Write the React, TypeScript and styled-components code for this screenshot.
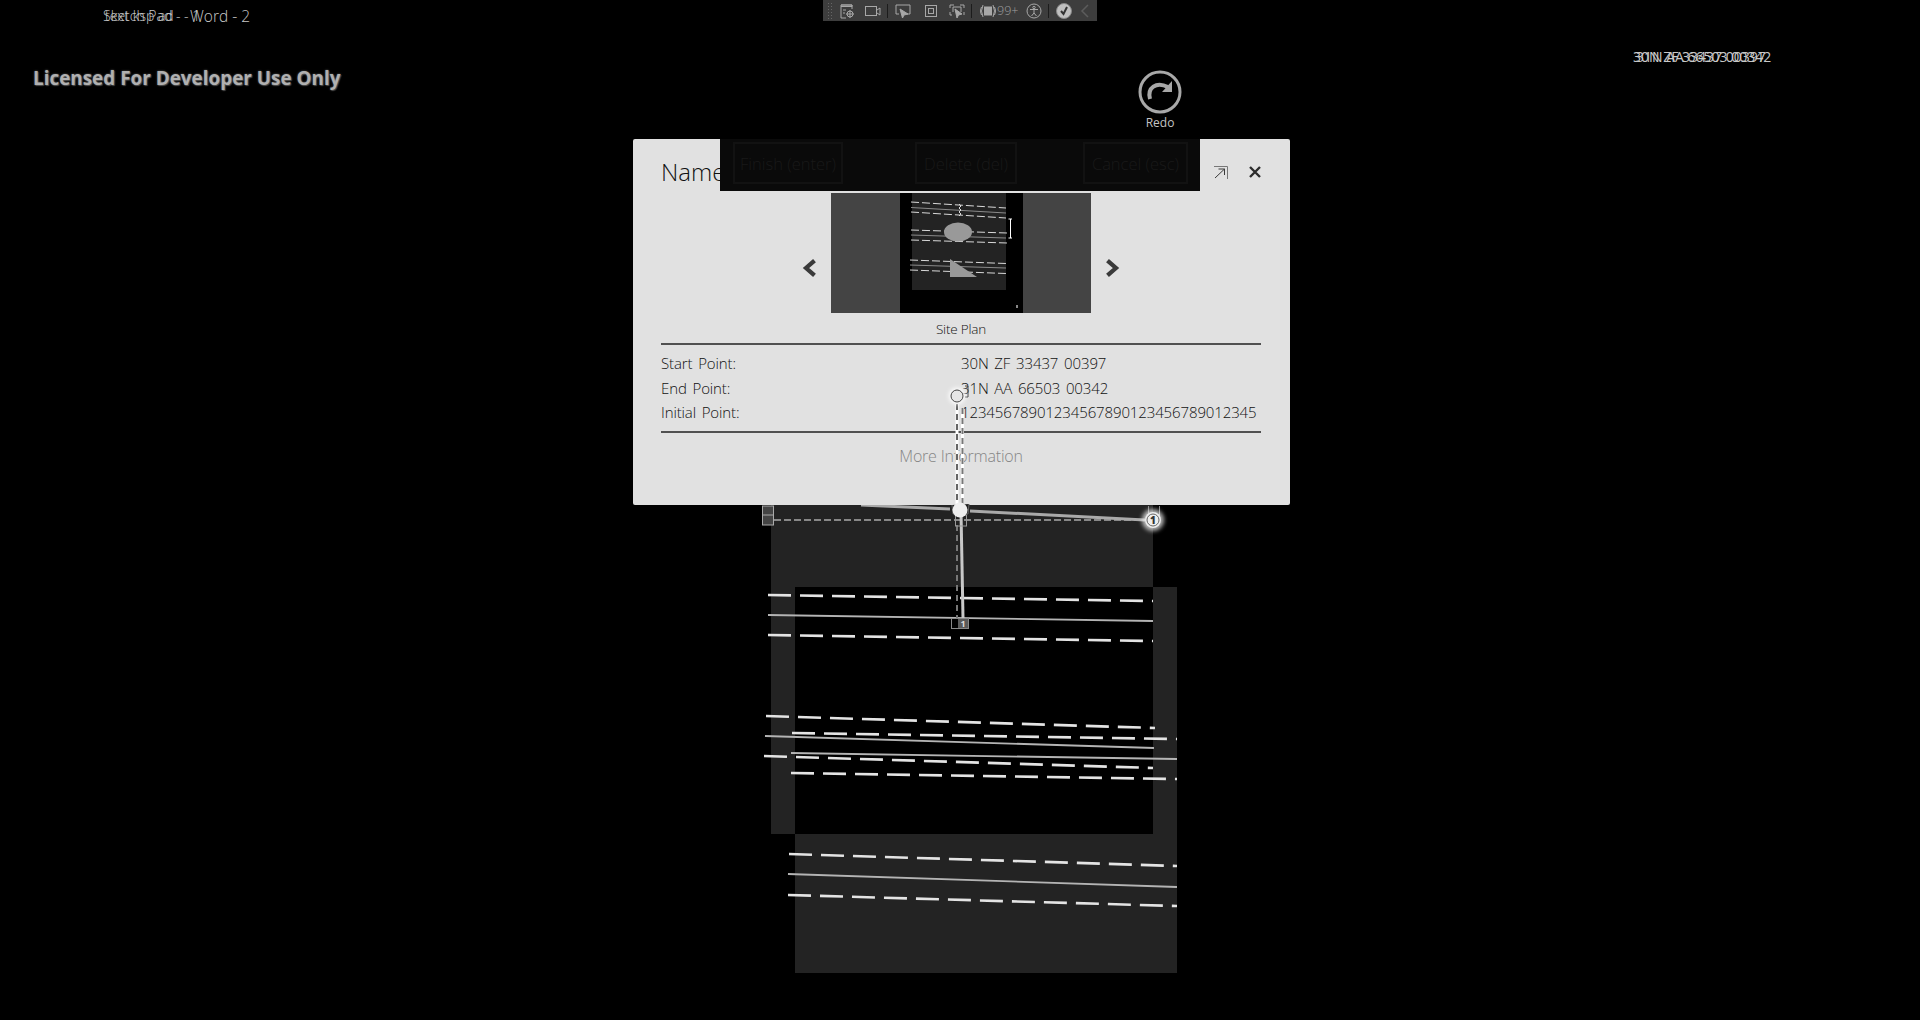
import * as React from 'react'
import styled, { createGlobalStyle } from 'styled-components'

const Global = createGlobalStyle`
  html, body {
    margin: 0;
    background: #000;
  }
`

const Page = styled.div`
  position: relative;
  width: 1920px;
  height: 1020px;
  overflow: hidden;
  background: #000;
  font-family: 'Open Sans', 'Noto Sans', sans-serif;
  font-weight: 300;
`

const Layer = styled.svg<{ $top?: boolean }>`
  position: absolute;
  left: 0;
  top: 0;
  z-index: ${(p) => (p.$top ? 5 : 0)};
  pointer-events: none;
`

const GarbledText = styled.div<{ $x: number; $y: number; $size: number; $weight?: number }>`
  position: absolute;
  left: ${(p) => p.$x}px;
  top: ${(p) => p.$y}px;
  font-size: ${(p) => p.$size}px;
  font-weight: ${(p) => p.$weight ?? 300};
  line-height: 20px;
  color: #c8c8c8;
  white-space: nowrap;
`

const Watermark = styled.div`
  position: absolute;
  left: 33px;
  top: 65px;
  font-family: 'Open Sans', sans-serif;
  font-size: 18.9px;
  line-height: 26px;
  font-weight: 700;
  color: #b0b0b0;
  text-shadow: 0 0 2px #666, 1px 1px 1px #444;
`

const ToolBar = styled.div`
  position: absolute;
  left: 823px;
  top: 0;
  width: 274px;
  height: 21px;
  display: flex;
  align-items: center;
  background: #3d3d3d;
  color: #a8a8a8;
`

const Grip = styled.span`
  width: 6px;
  height: 17px;
  margin: 0 6px 0 4px;
  background-image: radial-gradient(#666 1px, transparent 1px);
  background-size: 3px 3px;
`

const ToolSep = styled.span<{ $after?: number }>`
  width: 1px;
  height: 14px;
  margin: 0 ${(p) => p.$after ?? 6}px 0 6px;
  background: #1c1c1c;
`

const ToolIcon = styled.svg<{ $gap?: number }>`
  width: 16px;
  height: 16px;
  flex: none;
  margin-right: ${(p) => p.$gap ?? 0}px;
  fill: none;
  stroke: #a8a8a8;
  stroke-width: 1;
`

const Count = styled.span`
  width: 21px;
  margin-right: 8px;
  font-size: 12.5px;
  line-height: 21px;
  color: #a0a0a0;
`

const RedoButton = styled.div`
  position: absolute;
  left: 1135px;
  top: 70px;
  width: 50px;
  display: flex;
  flex-direction: column;
  align-items: center;
  gap: 1px;
  color: #c4c4c4;
  font-size: 12px;
  line-height: 15px;
  font-weight: 400;
`

const Dialog = styled.div`
  position: absolute;
  left: 633px;
  top: 139px;
  width: 657px;
  height: 366px;
  box-sizing: border-box;
  padding: 0 29px 0 28px;
  display: flex;
  flex-direction: column;
  background: #e1e1e1;
  border-radius: 2px;
  color: #111;
  z-index: 2;
`

const Header = styled.div`
  height: 54px;
  flex: none;
  display: flex;
  align-items: flex-start;
  justify-content: space-between;
`

const Title = styled.h1`
  margin: 16px 0 0;
  font-size: 24px;
  line-height: 34px;
  font-weight: 300;
`

const HeaderTools = styled.div`
  display: flex;
  align-items: center;
  gap: 20px;
  margin: 26px -1px 0 0;
`

const Carousel = styled.div`
  height: 120px;
  flex: none;
  display: flex;
  align-items: flex-start;
  justify-content: center;
  gap: 12px;
`

const Chevron = styled.svg`
  width: 18px;
  height: 18px;
  margin-top: 66px;
  fill: none;
  stroke: #3a3a3a;
  stroke-width: 3.8;
`

const Thumb = styled.svg`
  width: 260px;
  height: 120px;
  flex: none;
`

const Caption = styled.div`
  height: 30px;
  box-sizing: border-box;
  padding-top: 6px;
  font-size: 13.5px;
  line-height: 20px;
  text-align: center;
  letter-spacing: -0.2px;
`

const Details = styled.div`
  padding: 6px 0 6.5px;
  border-top: 2px solid #505050;
  border-bottom: 2px solid #505050;
`

const Row = styled.div`
  display: grid;
  grid-template-columns: 300px 1fr;
  font-size: 15px;
  line-height: 24.5px;
  letter-spacing: -0.12px;
  word-spacing: 2px;
  white-space: nowrap;
`

const More = styled.div`
  font-size: 16px;
  line-height: 46px;
  color: #858585;
  text-align: center;
  letter-spacing: -0.2px;
`

const ActionBar = styled.div`
  position: absolute;
  left: 720px;
  top: 139px;
  width: 480px;
  height: 52px;
  box-sizing: border-box;
  padding: 3px 0 0 13px;
  display: flex;
  align-items: flex-start;
  background: #0a0a0a;
  z-index: 3;
`

const ActionButton = styled.button<{ $width: number; $after: number }>`
  width: ${(p) => p.$width}px;
  height: 42px;
  margin-right: ${(p) => p.$after}px;
  padding: 0;
  background: transparent;
  border: 2px solid #121212;
  color: #191919;
  font-family: inherit;
  font-size: 16.5px;
  font-weight: 300;
  white-space: nowrap;
`

const Handle = styled.span`
  position: absolute;
  left: 951px;
  top: 618px;
  width: 18px;
  height: 11px;
  display: flex;
  justify-content: flex-end;
  z-index: 6;
  border: 1px solid #888;
  box-sizing: border-box;
`

const HandleNum = styled.span`
  width: 10px;
  background: #5a5a5a;
  color: #ddd;
  font-size: 9px;
  line-height: 9px;
  font-weight: 700;
  text-align: center;
`

const StepNum = styled.span`
  position: absolute;
  left: 1146px;
  top: 513px;
  width: 14px;
  height: 14px;
  z-index: 6;
  color: #333;
  font-size: 10px;
  line-height: 14px;
  font-weight: 800;
  text-align: center;
`

type Seg = [number, number, number, number]

const dashed: Seg[] = [
  [768, 595, 1153, 601],
  [768, 635, 1153, 641],
  [766, 716, 1155, 728],
  [764, 756, 1153, 768],
  [792, 733, 1177, 739],
  [791, 773, 1177, 779],
  [789, 854, 1177, 866],
  [788, 895, 1177, 906],
]

const solid: Seg[] = [
  [768, 615, 1153, 621],
  [765, 736, 1154, 748],
  [791, 753, 1177, 759],
  [788, 874, 1177, 887],
]

const thumbDashed: Seg[] = [
  [80, 9, 175, 15],
  [80, 19, 175, 25],
  [80, 37, 176, 40],
  [80, 47, 176, 50],
  [79, 67, 175, 70.5],
  [79, 77, 175, 80.5],
]

const thumbSolid: Seg[] = [
  [80, 14.5, 175, 20],
  [80, 42, 175, 45],
  [79, 72, 175, 75],
]

const Road: React.FC = () => (
  <Layer width={1920} height={1020}>
    <path d="M771 505H1153V587H795V834H771Z" fill="#232323" />
    <path d="M1153 587H1177V973H795V834H1153Z" fill="#232323" />
    {solid.map(([x1, y1, x2, y2]) => (
      <line key={`s${y1}`} x1={x1} y1={y1} x2={x2} y2={y2} stroke="#b4b4b4" strokeWidth={1.8} />
    ))}
    {dashed.map(([x1, y1, x2, y2]) => (
      <line key={`d${y1}`} x1={x1} y1={y1} x2={x2} y2={y2} stroke="#e4e4e4" strokeWidth={2.6} strokeDasharray="23 9" />
    ))}
    <line x1={774} y1={520} x2={1145} y2={520} stroke="#eee" strokeWidth={1} strokeDasharray="7 3" />
    <path d="M861 505L950 509M970 511L1145 520" stroke="#aaa" strokeWidth={3} fill="none" />
    <line x1={957} y1={525} x2={957} y2={618} stroke="#777" strokeWidth={2} strokeDasharray="6 4" />
    <line x1={961} y1={512} x2={963} y2={618} stroke="#c8c8c8" strokeWidth={3} />
    <rect x={762.5} y={506} width={11} height={19} fill="#444" stroke="#aaa" />
    <line x1={762} y1={515} x2={774} y2={515} stroke="#aaa" />
    <path d="M1148.5 506V516M1159.5 506V516" stroke="#888" />
    <rect x={955.5} y={515} width={11} height={11} fill="none" stroke="#999" />
  </Layer>
)

const Overlay: React.FC = () => (
  <Layer $top width={1920} height={1020}>
    <defs>
      <filter id="glow" x="-60%" y="-60%" width="220%" height="220%">
        <feGaussianBlur stdDeviation="2" />
      </filter>
    </defs>
    <line x1={957} y1={404} x2={957} y2={506} stroke="#fff" strokeWidth={3} />
    <line x1={957} y1={404} x2={957} y2={506} stroke="#666" strokeWidth={2} strokeDasharray="6 4" />
    <line x1={962.5} y1={408} x2={962.5} y2={506} stroke="#fff" strokeWidth={3} />
    <line x1={962.5} y1={408} x2={962.5} y2={506} stroke="#777" strokeWidth={2} strokeDasharray="6 4" />
    <path d="M965 386h3v11h-3" fill="none" stroke="#444" />
    <circle cx={957} cy={396} r={8} fill="#fff" filter="url(#glow)" />
    <circle cx={957} cy={396} r={6} fill="#e6e6e6" stroke="#444" />
    <path d="M952 505L953 514H968L969 504" fill="#222" stroke="#666" />
    <circle cx={960} cy={510} r={7.5} fill="#eee" />
    <circle cx={1153} cy={520} r={11} fill="#fff" opacity={0.7} filter="url(#glow)" />
    <circle cx={1153} cy={520} r={8} fill="#eee" />
    <circle cx={1153} cy={520} r={6} fill="none" stroke="#666" />
  </Layer>
)

const App: React.FC = () => (
  <Page>
    <Global />
    <Road />
    <GarbledText $x={103} $y={6} $size={14}>Sketch Pad - - 1</GarbledText>
    <GarbledText $x={105} $y={6} $size={14}>text ksp ad</GarbledText>
    <GarbledText $x={190} $y={6} $size={15.5}>Word - 2</GarbledText>
    <Watermark>Licensed For Developer Use Only</Watermark>
    <ToolBar>
      <Grip />
      <ToolIcon viewBox="0 0 16 16" $gap={10}>
        <path d="M13 6V2H2V15H7M2 2h11v1.5H2" />
        <circle cx="11" cy="11" r="3" />
        <path d="M11 7v8M7 11h8M4 7h3M4 10h2" />
      </ToolIcon>
      <ToolIcon viewBox="0 0 16 16">
        <rect x="0.5" y="3.5" width="11" height="9" />
        <path d="M12 7l3-2v7l-3-2" />
      </ToolIcon>
      <ToolSep $after={7} />
      <ToolIcon viewBox="0 0 16 16" $gap={12}>
        <path d="M4 11H1V2H15V11H12" />
        <path d="M5 6L13 11L9 12L7.5 15Z" fill="#a8a8a8" />
      </ToolIcon>
      <ToolIcon viewBox="0 0 16 16" $gap={10}>
        <rect x="2.5" y="2.5" width="11" height="11" />
        <rect x="5.5" y="5.5" width="5" height="5" />
      </ToolIcon>
      <ToolIcon viewBox="0 0 16 16">
        <path d="M1 5V2H5M11 2H15V5M15 9V12M1 9V12H3" />
        <path d="M4 4H12V9M4 4V9" />
        <path d="M6 6L13 11L9.5 12L8 15Z" fill="#a8a8a8" />
      </ToolIcon>
      <ToolSep $after={8} />
      <ToolIcon viewBox="0 0 16 16" $gap={1}>
        <rect x="4.5" y="4" width="7" height="8" fill="#a8a8a8" />
        <path d="M3 2Q0 8 3 14M13 2Q16 8 13 14M1.5 4Q-1 8 1.5 12M14.5 4Q17 8 14.5 12" />
      </ToolIcon>
      <Count>99+</Count>
      <ToolIcon viewBox="0 0 16 16">
        <circle cx="8" cy="8" r="7" />
        <circle cx="8" cy="4.5" r="1.2" />
        <path d="M4 6.5H12M8 6.5V10L5.5 13M8 10L10.5 13" />
      </ToolIcon>
      <ToolSep $after={7} />
      <ToolIcon viewBox="0 0 16 16" $gap={6}>
        <circle cx="8" cy="8" r="7.5" fill="#c0c0c0" stroke="#888" />
        <path d="M5 8L7.5 11L11 4" stroke="#333" strokeWidth="2" />
      </ToolIcon>
      <ToolIcon viewBox="0 0 16 16">
        <path d="M10 2L4 8L10 14" stroke="#5c5c5c" strokeWidth="1.5" />
      </ToolIcon>
    </ToolBar>
    <GarbledText $x={1633} $y={47} $size={14} $weight={400}>30N ZF 33437 00397</GarbledText>
    <GarbledText $x={1636} $y={47} $size={14} $weight={400}>31N AA 66503 00342</GarbledText>
    <RedoButton>
      <svg width="44" height="44" viewBox="0 0 44 44" fill="none" stroke="#a8a8a8">
        <circle cx="22" cy="22" r="20" strokeWidth="3" />
        <path d="M12 29C9 18 18 11 30 17" strokeWidth="4" />
        <path d="M24 22L34 22L34 11Z" fill="#a8a8a8" stroke="none" />
      </svg>
      <span>Redo</span>
    </RedoButton>
    <Dialog>
      <Header>
        <Title>Name: 2</Title>
        <HeaderTools>
          <svg width="14" height="14" viewBox="0 0 14 14" fill="none" stroke="#3a3a3a">
            <path d="M0 1.5H13.5V14" stroke="#777" />
            <path d="M1 13L10.5 4M4.5 4H10.5V10" />
          </svg>
          <svg width="14" height="14" viewBox="0 0 14 14" fill="none" stroke="#2c2c2c" strokeWidth="2.4">
            <path d="M2 2L12 12M12 2L2 12" />
          </svg>
        </HeaderTools>
      </Header>
      <Carousel>
        <Chevron viewBox="0 0 16 16">
          <path d="M12 1.5L4.5 8L12 14.5" />
        </Chevron>
        <Thumb viewBox="0 0 260 120">
          <rect width="260" height="120" fill="#444" />
          <rect x="69" width="123" height="120" fill="#000" />
          <rect x="81" width="94" height="97" fill="#232323" />
          {thumbSolid.map(([x1, y1, x2, y2]) => (
            <line key={`ts${y1}`} x1={x1} y1={y1} x2={x2} y2={y2} stroke="#8a8a8a" strokeWidth={1} />
          ))}
          {thumbDashed.map(([x1, y1, x2, y2]) => (
            <line key={`td${y1}`} x1={x1} y1={y1} x2={x2} y2={y2} stroke="#d8d8d8" strokeWidth={1} strokeDasharray="8 3" />
          ))}
          <path d="M128 11L130 13L128 15L130 17L128 19L130 21L128 23" fill="none" stroke="#ddd" />
          <ellipse cx="127" cy="39" rx="14" ry="9.5" fill="#999" />
          <path d="M119 66L146 84H119Z" fill="#999" />
          <path d="M177.5 26H181M179.5 26V45M177.5 45H181" stroke="#fff" fill="none" />
          <rect x="185" y="112" width="2" height="3" fill="#888" />
        </Thumb>
        <Chevron viewBox="0 0 16 16">
          <path d="M4 1.5L11.5 8L4 14.5" />
        </Chevron>
      </Carousel>
      <Caption>Site Plan</Caption>
      <Details>
        <Row><span>Start Point:</span><span>30N ZF 33437 00397</span></Row>
        <Row><span>End Point:</span><span>31N AA 66503 00342</span></Row>
        <Row><span>Initial Point:</span><span>12345678901234567890123456789012345</span></Row>
      </Details>
      <More>More Information</More>
    </Dialog>
    <ActionBar>
      <ActionButton $width={110} $after={72}>Finish (enter)</ActionButton>
      <ActionButton $width={102} $after={66}>Delete (del)</ActionButton>
      <ActionButton $width={105} $after={0}>Cancel (esc)</ActionButton>
    </ActionBar>
    <Overlay />
    <StepNum>1</StepNum>
    <Handle><HandleNum>1</HandleNum></Handle>
  </Page>
)

export default App
